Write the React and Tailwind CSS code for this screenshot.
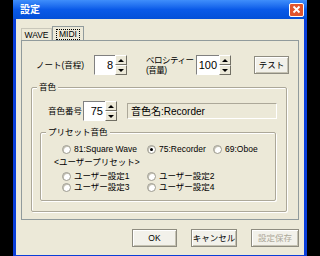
const font = { fontFamily: '"Liberation Sans", "Noto Sans CJK JP", sans-serif' }

function Spinner() {
  return (
    <div className="flex flex-col w-[12px] h-full">
      <div className="flex-1 flex items-center justify-center bg-[#ece9d8] border border-t-white border-l-white border-b-[#716f64] border-r-[#716f64]">
        <div className="w-0 h-0 border-l-[3px] border-r-[3px] border-b-[3px] border-l-transparent border-r-transparent border-b-black" />
      </div>
      <div className="flex-1 flex items-center justify-center bg-[#ece9d8] border border-t-white border-l-white border-b-[#716f64] border-r-[#716f64]">
        <div className="w-0 h-0 border-l-[3px] border-r-[3px] border-t-[3px] border-l-transparent border-r-transparent border-t-black" />
      </div>
    </div>
  )
}

function SpinBox({ value, w }) {
  return (
    <div className="flex h-[20px]">
      <div
        className={`${w} h-full bg-white border border-[#808080] border-r-0 border-b-white flex items-center justify-end pr-[2px] text-[11px]`}
      >
        {value}
      </div>
      <Spinner />
    </div>
  )
}

function Radio({ checked, label }) {
  return (
    <div className="flex items-center h-[11px] gap-[3px]">
      <div className="w-[9px] h-[9px] shrink-0 rounded-full bg-white border border-[#9c9a8e] shadow-[inset_1px_1px_0_#c4c1b3] flex items-center justify-center">
        {checked && <div className="w-[3px] h-[3px] rounded-full bg-black" />}
      </div>
      <span className="leading-[11px]">{label}</span>
    </div>
  )
}

function Group({ title, className, children }) {
  return (
    <div className={`border border-[#aca899] rounded-[2px] shadow-[inset_1px_1px_0_#fff,1px_1px_0_#fff] ${className}`}>
      <div className="flex h-[5px]">
        <span className="-mt-[6px] ml-[5px] px-[2px] bg-[#ece9d8] leading-[11px] h-[11px]">{title}</span>
      </div>
      {children}
    </div>
  )
}

function Button({ children, w, disabled }) {
  return (
    <div
      className={`${w} h-[18px] flex items-center justify-center bg-[#f2f1ea] border border-[#8e8c80] shadow-[inset_1px_1px_0_#fff,inset_-1px_-1px_0_#c5c2b2] ${disabled ? 'text-[#aca899]' : 'text-black'}`}
    >
      {children}
    </div>
  )
}

export default function App() {
  return (
    <div className="w-[320px] h-[256px] bg-black flex text-[8.5px] text-black whitespace-nowrap" style={font}>
      <div className="ml-[13px] w-[294px] h-[256px] bg-[#0a3ed8] flex flex-col px-[3px] pb-[1px]">
        <div className="-mx-[3px] h-[19px] flex items-center pl-[7px] pr-[3px] bg-gradient-to-b from-[#3f8efb] via-[#0a5ae8] to-[#0450d8]">
          <span className="text-white font-bold text-[10px] flex-1">設定</span>
          <div className="w-[15px] h-[14px] rounded-[2px] border border-white bg-[#e2552d] flex items-center justify-center">
            <svg width="9" height="9" viewBox="0 0 9 9">
              <path d="M1.5 1.5 L7.5 7.5 M7.5 1.5 L1.5 7.5" stroke="#fff" strokeWidth="1.8" />
            </svg>
          </div>
        </div>
        <div className="flex-1 bg-[#ece9d8] flex flex-col pt-[7px] px-[5px]">
          <div className="flex items-end h-[14px]">
            <div className="w-[31px] h-[12px] flex items-center justify-center border border-b-0 border-[#c9c7ba] bg-[#ece9d8] leading-[10px]">
              WAVE
            </div>
            <div className="w-[32px] h-[15px] -mb-[1px] flex items-center justify-center border border-b-0 border-[#919b9c] bg-[#ece9d8]">
              <span className="border border-dotted border-black px-[2px] leading-[9px]">MIDI</span>
            </div>
          </div>
          <div className="h-[180px] border border-[#919b9c] flex flex-col">
            <div className="flex items-center mt-[14px] h-[20px]">
              <span className="ml-[14px] w-[58px]">ノート(音程)</span>
              <SpinBox value="8" w="w-[21px]" />
              <span className="ml-[19px] w-[50px] leading-[10px] tracking-[-0.5px]">
                ベロシティー
                <br />
                (音量)
              </span>
              <SpinBox value="100" w="w-[23px]" />
              <div className="ml-[23px]">
                <Button w="w-[35px]">テスト</Button>
              </div>
            </div>
            <Group title="音色" className="mt-[12px] ml-[9px] mr-[11px] pb-[10px]">
              <div className="flex items-center mt-[9px] h-[18px]">
                <span className="ml-[16px] w-[35px]">音色番号</span>
                <SpinBox value="75" w="w-[22px]" />
                <div className="ml-[10px] w-[150px] h-[16px] bg-[#ece9d8] border border-[#aca899] border-r-white border-b-white flex items-center pl-[3px] text-[10px]">
                  音色名:Recorder
                </div>
              </div>
              <Group title="プリセット音色" className="mt-[12px] ml-[8px] mr-[10px] pb-[7px]">
                <div className="flex mt-[6px] ml-[21px]">
                  <div className="w-[85px]">
                    <Radio label="81:Square Wave" />
                  </div>
                  <div className="w-[66px]">
                    <Radio label="75:Recorder" checked />
                  </div>
                  <Radio label="69:Oboe" />
                </div>
                <div className="ml-[13px] mt-[1px] h-[12px] leading-[12px]">&lt;ユーザープリセット&gt;</div>
                <div className="flex mt-[3px] ml-[21px]">
                  <div className="w-[85px]">
                    <Radio label="ユーザー設定1" />
                  </div>
                  <Radio label="ユーザー設定2" />
                </div>
                <div className="flex ml-[21px]">
                  <div className="w-[85px]">
                    <Radio label="ユーザー設定3" />
                  </div>
                  <Radio label="ユーザー設定4" />
                </div>
              </Group>
            </Group>
          </div>
          <div className="flex justify-end mt-[9px] gap-[14px]">
            <Button w="w-[45px]">OK</Button>
            <Button w="w-[46px]">キャンセル</Button>
            <Button w="w-[48px]" disabled>
              設定保存
            </Button>
          </div>
        </div>
      </div>
    </div>
  )
}
